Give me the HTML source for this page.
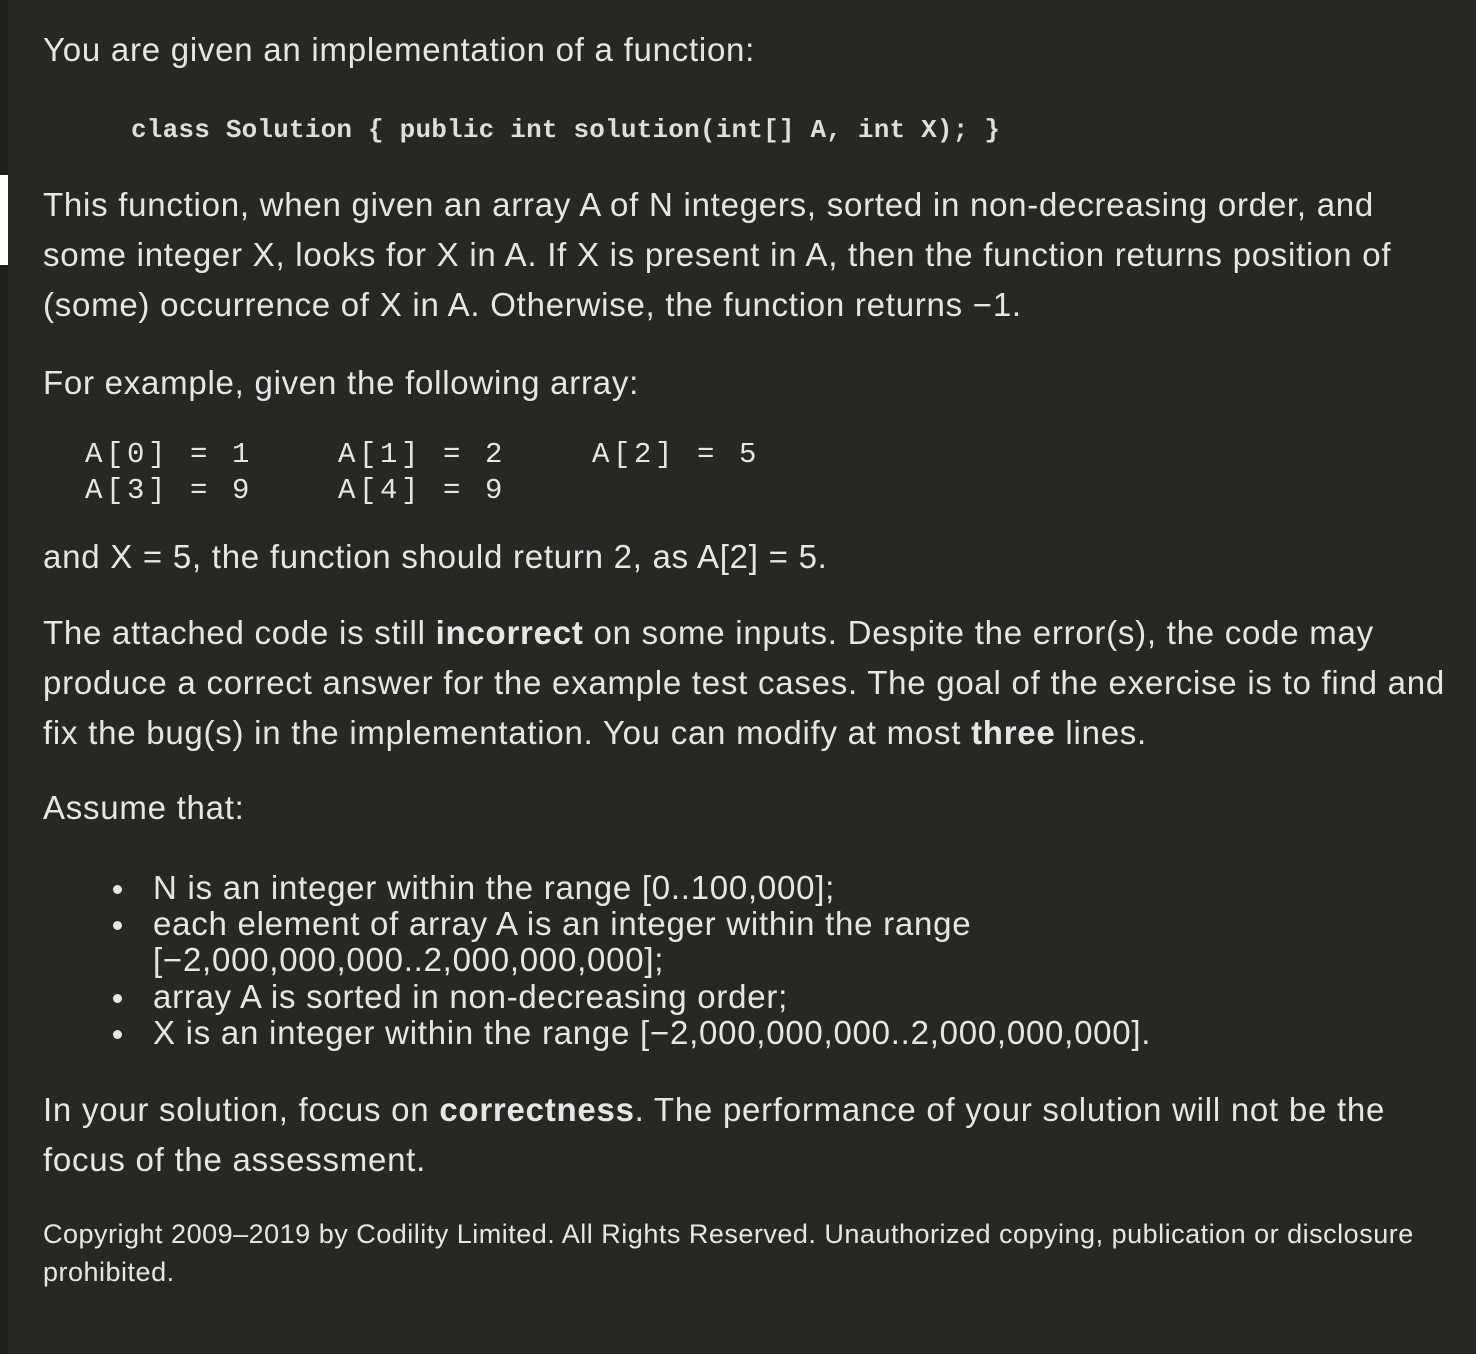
<!DOCTYPE html>
<html><head><meta charset="utf-8"><style>
html,body{margin:0;padding:0}
body{width:1476px;height:1354px;background:#272824;position:relative;overflow:hidden;font-family:"Liberation Sans",sans-serif;color:#e6e6e6}
.l{position:absolute;left:43px;white-space:nowrap;font-size:33px;letter-spacing:0.75px;height:50px;line-height:50px}
.m{position:absolute;white-space:nowrap;font-family:"Liberation Mono",monospace;color:#e6e6e6}
.code{font-size:26px;letter-spacing:0.2px;left:131px;top:112px;line-height:36px;font-weight:bold;color:#dedede}
.arr{font-size:29px;letter-spacing:3.6px;line-height:36px;left:85px}
.li{position:absolute;left:153px;white-space:nowrap;font-size:33px;letter-spacing:0.75px;line-height:36px;height:36px}
.b{position:absolute;left:113px;width:9px;height:9px;border-radius:50%;background:#e6e6e6}
.c{position:absolute;left:43px;white-space:nowrap;font-size:27px;letter-spacing:0.5px;line-height:38px}
strong{font-weight:bold}
</style></head><body>
<div style="position:absolute;left:0;top:0;width:8px;height:1354px;background:#1e1f1b"></div>
<div style="position:absolute;left:0;top:175px;width:8px;height:90px;background:#fff"></div>
<div class="l" style="top:25px">You are given an implementation of a function:</div>
<div class="m code">class Solution { public int solution(int[] A, int X); }</div>
<div class="l" style="top:180px">This function, when given an array A of N integers, sorted in non-decreasing order, and</div>
<div class="l" style="top:230px">some integer X, looks for X in A. If X is present in A, then the function returns position of</div>
<div class="l" style="top:280px">(some) occurrence of X in A. Otherwise, the function returns −1.</div>
<div class="l" style="top:358px">For example, given the following array:</div>
<div class="m arr" style="top:437px">A[0] = 1</div>
<div class="m arr" style="top:437px;left:338px">A[1] = 2</div>
<div class="m arr" style="top:437px;left:592px">A[2] = 5</div>
<div class="m arr" style="top:473px">A[3] = 9</div>
<div class="m arr" style="top:473px;left:338px">A[4] = 9</div>
<div class="l" style="top:532px">and X = 5, the function should return 2, as A[2] = 5.</div>
<div class="l" style="top:608px">The attached code is still <strong>incorrect</strong> on some inputs. Despite the error(s), the code may</div>
<div class="l" style="top:658px">produce a correct answer for the example test cases. The goal of the exercise is to find and</div>
<div class="l" style="top:708px">fix the bug(s) in the implementation. You can modify at most <strong>three</strong> lines.</div>
<div class="l" style="top:783px">Assume that:</div>
<div class="b" style="top:885px"></div><div class="li" style="top:870px">N is an integer within the range [0..100,000];</div>
<div class="b" style="top:921px"></div><div class="li" style="top:906px">each element of array A is an integer within the range</div>
<div class="li" style="top:942px">[−2,000,000,000..2,000,000,000];</div>
<div class="b" style="top:994px"></div><div class="li" style="top:979px">array A is sorted in non-decreasing order;</div>
<div class="b" style="top:1030px"></div><div class="li" style="top:1015px">X is an integer within the range [−2,000,000,000..2,000,000,000].</div>
<div class="l" style="top:1085px">In your solution, focus on <strong>correctness</strong>. The performance of your solution will not be the</div>
<div class="l" style="top:1135px">focus of the assessment.</div>
<div class="c" style="top:1215px">Copyright 2009–2019 by Codility Limited. All Rights Reserved. Unauthorized copying, publication or disclosure</div>
<div class="c" style="top:1253px">prohibited.</div>
</body></html>
